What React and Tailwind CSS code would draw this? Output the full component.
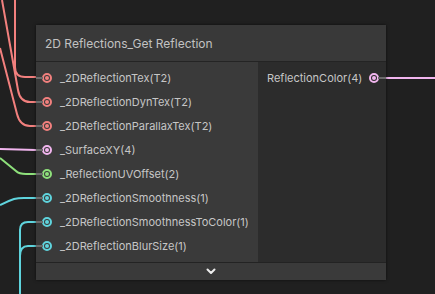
import React from 'react';

const RED = '#f2807e';
const PINK = '#f1b5ee';
const GREEN = '#8ee07b';
const CYAN = '#5fd4dd';

const inputs = [
    { label: '_2DReflectionTex(T2)', color: RED },
    { label: '_2DReflectionDynTex(T2)', color: RED },
    { label: '_2DReflectionParallaxTex(T2)', color: RED },
    { label: '_SurfaceXY(4)', color: PINK },
    { label: '_ReflectionUVOffset(2)', color: GREEN },
    { label: '_2DReflectionSmoothness(1)', color: CYAN },
    { label: '_2DReflectionSmoothnessToColor(1)', color: CYAN },
    { label: '_2DReflectionBlurSize(1)', color: CYAN },
];

const Port = ({ color }) => (
    <div
        className="w-[10px] h-[10px] rounded-full border-2 flex items-center justify-center shrink-0"
        style={{ borderColor: color }}
    >
        <div className="w-[4px] h-[4px] rounded-full" style={{ background: color }} />
    </div>
);

const Wires = () => (
    <svg className="absolute inset-0" width="435" height="294" fill="none" strokeWidth="2">
        <path d="M15 0 L15 67 Q15 77 25 77 L36 77" stroke={RED} />
        <path d="M2 0 L18 90 Q20 102 30 102 L36 102" stroke={RED} />
        <path d="M0 48 L17 114 Q20 126 30 126 L36 126" stroke={RED} />
        <path d="M0 149 L36 150" stroke={PINK} />
        <path d="M0 158 L16 171 Q19 174 26 174 L36 174" stroke={GREEN} />
        <path d="M0 205 Q8 201 14 199 Q18 198 24 198 L36 198" stroke={CYAN} />
        <path d="M20 294 L20 230 Q20 222 28 222 L36 222" stroke={CYAN} />
        <path d="M20 256 Q20 246 28 246 L36 246" stroke={CYAN} />
        <path d="M386 78 L435 78" stroke={PINK} />
    </svg>
);

export default function App() {
    return (
        <div
            className="relative w-[435px] h-[294px] bg-[#202020] overflow-hidden"
            style={{ fontFamily: 'Inter, "Noto Sans", sans-serif' }}
        >
            <Wires />
            <div className="absolute left-[36px] top-[25px] w-[350px] flex flex-col shadow-[0_0_3px_rgba(0,0,0,0.6)]">
                <div className="h-[36px] bg-[#393939] flex items-center pl-[9px] pt-px text-[12px] text-[#c2c2c2]">
                    2D Reflections_Get Reflection
                </div>
                <div className="h-px bg-[#242424]" />
                <div className="flex h-[200px]">
                    <div className="w-[222px] bg-[#3a3a3a] pt-[4px]">
                        {inputs.map((p) => (
                            <div key={p.label} className="relative h-[24px] flex items-center pl-[6px] gap-[8px]">
                                <div className="absolute left-0 top-[11px] w-[7px] h-[2px] bg-[#6b6b6b]" />
                                <Port color={p.color} />
                                <span className="text-[11px] text-[#c6c6c6] whitespace-nowrap">{p.label}</span>
                            </div>
                        ))}
                    </div>
                    <div className="flex-1 bg-[#2c2c2c] pt-[4px]">
                        <div className="relative h-[24px] flex items-center pl-[9px] pr-[7px] justify-between">
                            <span className="text-[11px] text-[#c6c6c6] whitespace-nowrap">ReflectionColor(4)</span>
                            <Port color={PINK} />
                            <div className="absolute right-0 top-[11px] w-[8px] h-[2px] bg-[#6b6b6b]" />
                        </div>
                    </div>
                </div>
                <div className="h-px bg-[#232323]" />
                <div className="h-[17px] bg-[#3a3a3a] flex items-center justify-center">
                    <svg width="10" height="7" viewBox="0 0 10 7" fill="none">
                        <path d="M1.5 1.5 L5 5 L8.5 1.5" stroke="#ececec" strokeWidth="2" strokeLinecap="round" strokeLinejoin="round" />
                    </svg>
                </div>
            </div>
        </div>
    );
}
